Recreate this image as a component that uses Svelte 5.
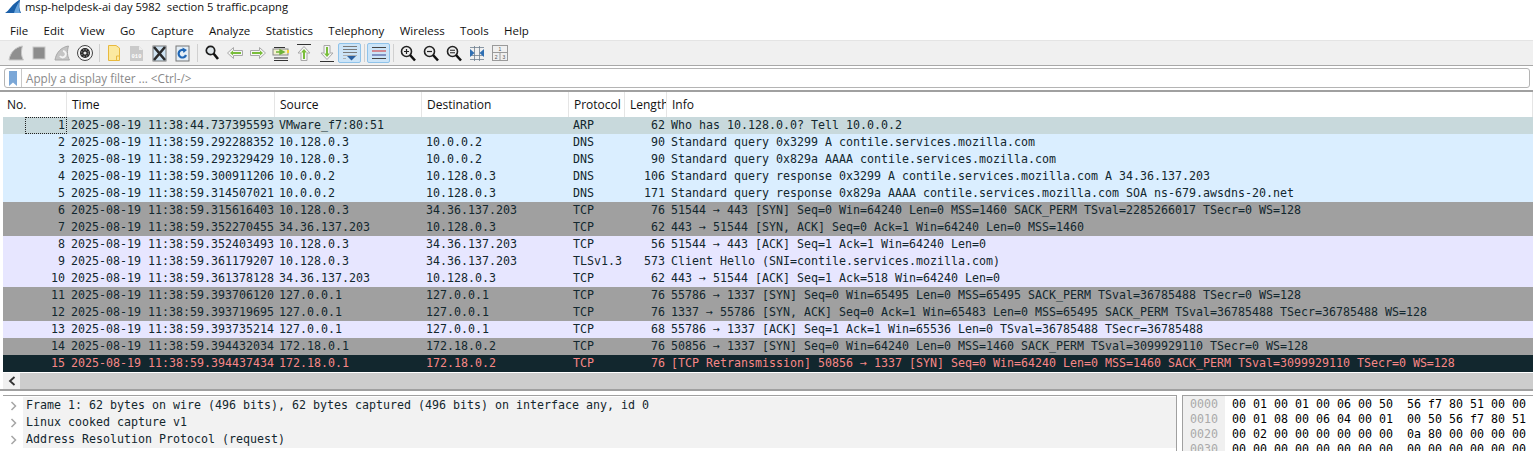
<script>
  const menus = ["File", "Edit", "View", "Go", "Capture", "Analyze", "Statistics", "Telephony", "Wireless", "Tools", "Help"];

  const columns = ["No.", "Time", "Source", "Destination", "Protocol", "Length", "Info"];

  const packets = [
    [1, "2025-08-19 11:38:44.737395593", "VMware_f7:80:51", "", "ARP", 62, "Who has 10.128.0.0? Tell 10.0.0.2", "arp"],
    [2, "2025-08-19 11:38:59.292288352", "10.128.0.3", "10.0.0.2", "DNS", 90, "Standard query 0x3299 A contile.services.mozilla.com", "dns"],
    [3, "2025-08-19 11:38:59.292329429", "10.128.0.3", "10.0.0.2", "DNS", 90, "Standard query 0x829a AAAA contile.services.mozilla.com", "dns"],
    [4, "2025-08-19 11:38:59.300911206", "10.0.0.2", "10.128.0.3", "DNS", 106, "Standard query response 0x3299 A contile.services.mozilla.com A 34.36.137.203", "dns"],
    [5, "2025-08-19 11:38:59.314507021", "10.0.0.2", "10.128.0.3", "DNS", 171, "Standard query response 0x829a AAAA contile.services.mozilla.com SOA ns-679.awsdns-20.net", "dns"],
    [6, "2025-08-19 11:38:59.315616403", "10.128.0.3", "34.36.137.203", "TCP", 76, "51544 → 443 [SYN] Seq=0 Win=64240 Len=0 MSS=1460 SACK_PERM TSval=2285266017 TSecr=0 WS=128", "syn"],
    [7, "2025-08-19 11:38:59.352270455", "34.36.137.203", "10.128.0.3", "TCP", 62, "443 → 51544 [SYN, ACK] Seq=0 Ack=1 Win=64240 Len=0 MSS=1460", "syn"],
    [8, "2025-08-19 11:38:59.352403493", "10.128.0.3", "34.36.137.203", "TCP", 56, "51544 → 443 [ACK] Seq=1 Ack=1 Win=64240 Len=0", "tcp"],
    [9, "2025-08-19 11:38:59.361179207", "10.128.0.3", "34.36.137.203", "TLSv1.3", 573, "Client Hello (SNI=contile.services.mozilla.com)", "tcp"],
    [10, "2025-08-19 11:38:59.361378128", "34.36.137.203", "10.128.0.3", "TCP", 62, "443 → 51544 [ACK] Seq=1 Ack=518 Win=64240 Len=0", "tcp"],
    [11, "2025-08-19 11:38:59.393706120", "127.0.0.1", "127.0.0.1", "TCP", 76, "55786 → 1337 [SYN] Seq=0 Win=65495 Len=0 MSS=65495 SACK_PERM TSval=36785488 TSecr=0 WS=128", "syn"],
    [12, "2025-08-19 11:38:59.393719695", "127.0.0.1", "127.0.0.1", "TCP", 76, "1337 → 55786 [SYN, ACK] Seq=0 Ack=1 Win=65483 Len=0 MSS=65495 SACK_PERM TSval=36785488 TSecr=36785488 WS=128", "syn"],
    [13, "2025-08-19 11:38:59.393735214", "127.0.0.1", "127.0.0.1", "TCP", 68, "55786 → 1337 [ACK] Seq=1 Ack=1 Win=65536 Len=0 TSval=36785488 TSecr=36785488", "tcp"],
    [14, "2025-08-19 11:38:59.394432034", "172.18.0.1", "172.18.0.2", "TCP", 76, "50856 → 1337 [SYN] Seq=0 Win=64240 Len=0 MSS=1460 SACK_PERM TSval=3099929110 TSecr=0 WS=128", "syn"],
    [15, "2025-08-19 11:38:59.394437434", "172.18.0.1", "172.18.0.2", "TCP", 76, "[TCP Retransmission] 50856 → 1337 [SYN] Seq=0 Win=64240 Len=0 MSS=1460 SACK_PERM TSval=3099929110 TSecr=0 WS=128", "bad"],
  ];

  const details = [
    "Frame 1: 62 bytes on wire (496 bits), 62 bytes captured (496 bits) on interface any, id 0",
    "Linux cooked capture v1",
    "Address Resolution Protocol (request)",
  ];

  const hexLines = [
    ["0000", "00 01 00 01 00 06 00 50  56 f7 80 51 00 00"],
    ["0010", "00 01 08 00 06 04 00 01  00 50 56 f7 80 51"],
    ["0020", "00 02 00 00 00 00 00 00  0a 80 00 00 00 00"],
    ["0030", "00 00 00 00 00 00 00 00  00 00 00 00 00 00"],
  ];
</script>

<div class="window">
  <div class="titlebar">
    <svg class="fin" width="18" height="14" viewBox="0 0 18 14">
      <path d="M2 13 C6 11 9 4 16 0 L17 0 C16 5 16 9 18 13 Z" fill="#1a5fa8" />
      <path d="M11 13 C12 9 14 5 16 2 C15.5 6 16 10 17 13 Z" fill="#6aa5dc" />
    </svg>
    <span>msp-helpdesk-ai day 5982&nbsp; section 5 traffic.pcapng</span>
  </div>

  <div class="menubar">
    {#each menus as m}
      <span class="menu">{m}</span>
    {/each}
  </div>

  <div class="toolbar">
    <!-- capture -->
    <div class="tool">
      <svg width="18" height="18" viewBox="0 0 18 18"><path d="M2 16 C3 9 8 3 15.5 2 C14 7 14 12 16.5 16 Z" fill="#8f8f8f" stroke="#c8c8c8" /></svg>
    </div>
    <div class="tool">
      <svg width="16" height="16" viewBox="0 0 16 16"><rect x="2" y="2" width="12" height="12" fill="#8c8c8c" stroke="#c8c8c8" /></svg>
    </div>
    <div class="tool">
      <svg width="18" height="18" viewBox="0 0 18 18">
        <path d="M2 16 C3 9 8 3 15.5 2 C14 7 14 12 16.5 16 Z" fill="#c4c4c4" stroke="#a8a8a8" />
        <path d="M7 12 A3.2 3.2 0 1 0 10 7" fill="none" stroke="#f4f4f4" stroke-width="2" />
      </svg>
    </div>
    <div class="tool">
      <svg width="18" height="18" viewBox="0 0 18 18">
        <circle cx="9" cy="9" r="7.5" fill="#f4f4f4" stroke="#444" />
        <circle cx="9" cy="9" r="5" fill="#222" />
        <circle cx="9" cy="9" r="3.4" fill="none" stroke="#888" stroke-width="1.2" stroke-dasharray="1.5 1.2" />
        <circle cx="9" cy="9" r="1.6" fill="#e8e8e8" />
      </svg>
    </div>
    <div class="sep"></div>

    <!-- files -->
    <div class="tool">
      <svg width="14" height="18" viewBox="0 0 14 18">
        <path d="M1.5 1.5 H9 L12.5 4 V16.5 H1.5 Z" fill="#fbe9a0" stroke="#e8b93e" />
        <path d="M9.5 16 V12 H12.5" fill="none" stroke="#e8b93e" />
      </svg>
    </div>
    <div class="tool">
      <svg width="15" height="17" viewBox="0 0 15 17">
        <path d="M1 1 H10 L14 5 V16 H1 Z" fill="#cacaca" />
        <path d="M10 1 V5 H14" fill="#ededed" />
        <text x="7.5" y="12.5" text-anchor="middle" class="bits">010</text>
      </svg>
    </div>
    <div class="tool">
      <svg width="15" height="17" viewBox="0 0 15 17">
        <rect x="1" y="1" width="13" height="15" fill="#cfe3f2" stroke="#777" />
        <path d="M2 2 L13 15 M13 2 L2 15" stroke="#2b2b2b" stroke-width="2.6" />
      </svg>
    </div>
    <div class="tool">
      <svg width="15" height="17" viewBox="0 0 15 17">
        <rect x="1" y="1" width="13" height="15" fill="#e4eef6" stroke="#777" />
        <path d="M11 10 A3.8 3.8 0 1 1 9.5 5.5" fill="none" stroke="#1f66b5" stroke-width="2.2" />
        <path d="M7.5 2.5 L12 5 L8.5 8 Z" fill="#1f66b5" />
      </svg>
    </div>
    <div class="sep"></div>

    <!-- navigation -->
    <div class="tool">
      <svg width="16" height="18" viewBox="0 0 16 18">
        <circle cx="6.5" cy="6.5" r="4.2" fill="#dfe6ea" stroke="#1c1c1c" stroke-width="1.7" />
        <path d="M9.5 9.5 L14 15" stroke="#111" stroke-width="2.6" />
      </svg>
    </div>
    <div class="tool">
      <svg width="16" height="12" viewBox="0 0 16 12">
        <path d="M0.5 6 L6.5 0.5 V3.5 H15.5 V8.5 H6.5 V11.5 Z" fill="#f6f6f6" stroke="#a8a8a8" />
        <path d="M3 6 L6 3.5 V5 H14 V7 H6 V8.5 Z" fill="#79bd3a" />
      </svg>
    </div>
    <div class="tool">
      <svg width="16" height="12" viewBox="0 0 16 12">
        <path d="M15.5 6 L9.5 0.5 V3.5 H0.5 V8.5 H9.5 V11.5 Z" fill="#f6f6f6" stroke="#a8a8a8" />
        <path d="M13 6 L10 3.5 V5 H2 V7 H10 V8.5 Z" fill="#79bd3a" />
      </svg>
    </div>
    <div class="tool">
      <svg width="18" height="18" viewBox="0 0 18 18">
        <path d="M2 3.5 H13 M2 14 H16 M2 16.5 H16" stroke="#333" />
        <rect x="1" y="5" width="15" height="6" fill="#f3f1cf" stroke="#888" />
        <path d="M4 8 H10 M8 6 L12 8 L8 10 Z" fill="#6db33a" stroke="#6db33a" stroke-width="1.4" />
        <rect x="15" y="6" width="2" height="3" fill="#f2d13b" />
      </svg>
    </div>
    <div class="tool">
      <svg width="14" height="18" viewBox="0 0 14 18">
        <path d="M0 0.5 H14" stroke="#333" />
        <path d="M7 2.5 L13 9 H10 V16.5 H4 V9 H1 Z" fill="#f6f6f6" stroke="#a8a8a8" />
        <path d="M7 5 L10 8.5 H8 V15 H6 V8.5 H4 Z" fill="#79bd3a" />
      </svg>
    </div>
    <div class="tool">
      <svg width="14" height="18" viewBox="0 0 14 18">
        <path d="M0 17.5 H14" stroke="#333" />
        <path d="M7 15.5 L13 9 H10 V1.5 H4 V9 H1 Z" fill="#f6f6f6" stroke="#a8a8a8" />
        <path d="M7 13 L10 9.5 H8 V3 H6 V9.5 H4 Z" fill="#79bd3a" />
      </svg>
    </div>
    <div class="tool on">
      <svg width="16" height="16" viewBox="0 0 16 16">
        <path d="M1 1.5 H15 M1 4.5 H15 M1 7.5 H15" stroke="#7a7a7a" />
        <path d="M1 10.5 H15 M1 13.5 H4" stroke="#b0b0b0" />
        <path d="M5 11 H14 L9.5 15.5 Z" fill="#2a5f9e" />
      </svg>
    </div>
    <div class="sep"></div>
    <div class="tool on">
      <svg width="16" height="14" viewBox="0 0 16 14">
        <path d="M1 1.5 H15" stroke="#444" />
        <path d="M1 5 H15" stroke="#d62e2e" />
        <path d="M1 9 H15" stroke="#34408f" />
        <path d="M1 12.5 H15" stroke="#444" />
      </svg>
    </div>
    <div class="sep"></div>

    <!-- zoom -->
    <div class="tool">
      <svg width="16" height="17" viewBox="0 0 16 17">
        <circle cx="6.5" cy="6.5" r="5" fill="#eeeeee" stroke="#222" stroke-width="1.6" />
        <path d="M10 10 L15 15.5" stroke="#111" stroke-width="2.6" />
        <path d="M4 6.5 H9 M6.5 4 V9" stroke="#222" stroke-width="1.2" />
      </svg>
    </div>
    <div class="tool">
      <svg width="16" height="17" viewBox="0 0 16 17">
        <circle cx="6.5" cy="6.5" r="5" fill="#eeeeee" stroke="#222" stroke-width="1.6" />
        <path d="M10 10 L15 15.5" stroke="#111" stroke-width="2.6" />
        <path d="M4 6.5 H9" stroke="#222" stroke-width="1.2" />
      </svg>
    </div>
    <div class="tool">
      <svg width="16" height="17" viewBox="0 0 16 17">
        <circle cx="6.5" cy="6.5" r="5" fill="#eeeeee" stroke="#222" stroke-width="1.6" />
        <path d="M10 10 L15 15.5" stroke="#111" stroke-width="2.6" />
        <path d="M4 5.3 H9 M4 7.7 H9" stroke="#222" stroke-width="1.1" />
      </svg>
    </div>
    <div class="tool">
      <svg width="14" height="15" viewBox="0 0 14 15">
        <path d="M0 1.5 H14 M0 13.5 H14 M0 9.5 H14 M4.5 0 V15 M9.5 0 V15" stroke="#6f7f8f" stroke-width="0.8" />
        <path d="M0 3 L4.5 7 L0 11 Z M14 3 L9.5 7 L14 11 Z" fill="#2f6fb3" />
      </svg>
    </div>
    <div class="tool">
      <svg width="16" height="16" viewBox="0 0 16 16">
        <rect x="0.5" y="0.5" width="15" height="15" fill="#f0f0f0" stroke="#9a9a9a" />
        <path d="M0.5 7.5 H15.5 M8 7.5 V15.5" stroke="#9a9a9a" />
        <text x="8" y="6" text-anchor="middle" class="pane-num">1</text>
        <text x="4.2" y="13.5" text-anchor="middle" class="pane-num">2</text>
        <text x="11.8" y="13.5" text-anchor="middle" class="pane-num">3</text>
      </svg>
    </div>
  </div>

  <div class="filterbar">
    <div class="filter">
      <div class="bookmark">
        <svg width="8" height="15" viewBox="0 0 8 15"><path d="M0 0 H8 V15 L4 11.5 L0 15 Z" fill="#7ba7d7" /></svg>
      </div>
      <span class="placeholder">Apply a display filter ... &lt;Ctrl-/&gt;</span>
    </div>
  </div>

  <div class="packets">
    <div class="row head">
      {#each columns as c}
        <div class="cell">{c}</div>
      {/each}
    </div>
    {#each packets as p, i}
      <div class="row {p[7]}">
        <div class="cell num" class:focus={i === 0}>{p[0]}</div>
        <div class="cell">{p[1]}</div>
        <div class="cell">{p[2]}</div>
        <div class="cell">{p[3]}</div>
        <div class="cell">{p[4]}</div>
        <div class="cell num">{p[5]}</div>
        <div class="cell">{p[6]}</div>
      </div>
    {/each}
  </div>

  <div class="hscroll">
    <div class="arrow">
      <svg width="8" height="10" viewBox="0 0 8 10"><path d="M6.5 1 L2 5 L6.5 9" fill="none" stroke="#333" stroke-width="1.8" /></svg>
    </div>
    <div class="track"></div>
  </div>

  <div class="split"></div>

  <div class="bottom">
    <div class="tree">
      {#each details as d}
        <div class="tree-row">
          <div class="chev">
            <svg width="7" height="10" viewBox="0 0 7 10"><path d="M1.5 1 L5.5 5 L1.5 9" fill="none" stroke="#a5a5a5" stroke-width="1.5" /></svg>
          </div>
          <div class="tree-text">{d}</div>
        </div>
      {/each}
    </div>
    <div class="hex">
      <div class="offsets">
        {#each hexLines as h}
          <div>{h[0]}</div>
        {/each}
      </div>
      <div class="bytes">
        {#each hexLines as h}
          <div>{h[1]}</div>
        {/each}
      </div>
    </div>
  </div>
</div>

<style>
  :global(body) {
    margin: 0;
    background: #fff;
    overflow: hidden;
  }

  .window {
    width: 1533px;
    height: 451px;
    overflow: hidden;
    font-family: "Open Sans", "Noto Sans", sans-serif;
    font-size: 11.5px;
    color: #111;
    background: #fff;
  }

  .titlebar {
    height: 20px;
    display: flex;
    align-items: center;
    overflow: hidden;
    position: relative;
  }
  .titlebar span {
    margin-left: 25px;
    padding-bottom: 8px;
    font-size: 11.2px;
  }
  .fin {
    position: absolute;
    left: 3px;
    top: 0;
  }

  .menubar {
    height: 20px;
    display: flex;
    align-items: center;
    padding-left: 3px;
  }
  .menu {
    padding: 0 7px;
    margin-right: 1.4px;
    font-size: 11.5px;
  }

  .toolbar {
    height: 26px;
    box-sizing: border-box;
    display: flex;
    align-items: center;
    padding-left: 4px;
    background: #f0f0f0;
    border-top: 1px solid #e4e4e4;
    border-bottom: 1px solid #a8a8a8;
  }
  .tool {
    width: 23px;
    height: 20px;
    box-sizing: border-box;
    display: flex;
    align-items: center;
    justify-content: center;
    border-radius: 2px;
  }
  .tool.on {
    background: #cce4f7;
    border: 1px solid #8fc3ea;
  }
  .sep {
    width: 1px;
    height: 18px;
    margin: 0 2.5px;
    background: #d0d0d0;
  }
  .bits {
    font-family: "Liberation Mono", monospace;
    font-size: 5.5px;
    font-weight: bold;
    fill: #fff;
  }
  .pane-num {
    font-family: "Liberation Sans", sans-serif;
    font-size: 5px;
    fill: #555;
  }

  .filterbar {
    height: 26px;
    box-sizing: border-box;
    padding: 2px 3px 0 4px;
    border-bottom: 2px solid #a0a0a0;
  }
  .filter {
    height: 20px;
    box-sizing: border-box;
    display: flex;
    align-items: center;
    border: 1px solid #b4b4b4;
    border-radius: 3px;
    background: #fff;
  }
  .bookmark {
    width: 17px;
    height: 100%;
    box-sizing: border-box;
    display: flex;
    align-items: center;
    justify-content: center;
    border-right: 1px solid #c8c8c8;
  }
  .placeholder {
    margin-left: 4px;
    color: #8a8a8a;
    font-size: 11.7px;
  }

  .packets {
    margin-left: 3px;
    font-family: "DejaVu Sans Mono", monospace;
    font-size: 11.63px;
  }
  .row {
    display: grid;
    grid-template-columns: 64px 208px 147px 147px 56px 42px 1fr;
    height: 17px;
    line-height: 17px;
    color: #12272e;
  }
  .cell {
    padding: 0 2px 0 4px;
    white-space: pre;
    overflow: hidden;
    box-sizing: border-box;
  }
  .cell.num {
    text-align: right;
  }
  .cell.focus {
    margin-left: 22px;
    outline: 1px dotted #222;
    outline-offset: -1px;
  }

  .head {
    height: 25px;
    line-height: 26px;
    font-family: "Open Sans", "Noto Sans", sans-serif;
    font-size: 12px;
    color: #111;
    background: #fff;
  }
  .head .cell {
    padding-left: 5px;
    border-right: 1px solid #e5e5e5;
  }
  .head .cell:first-child {
    padding-left: 4px;
  }

  .arp { background: #c8d9dc; }
  .dns { background: #daeeff; }
  .syn { background: #a0a0a0; }
  .tcp { background: #e7e6ff; }
  .bad { background: #12272e; color: #f78787; }

  .hscroll {
    height: 16px;
    margin: 1px 0 0 3px;
    display: flex;
  }
  .arrow {
    width: 17px;
    display: flex;
    align-items: center;
    justify-content: center;
    background: #f0f0f0;
  }
  .track {
    flex: 1;
    background: #cdcdcd;
  }

  .split {
    height: 2px;
    background: #a0a0a0;
  }

  .bottom {
    display: flex;
    height: 60px;
    margin-top: 4px;
    margin-left: 3px;
    font-family: "DejaVu Sans Mono", monospace;
    font-size: 11.63px;
  }
  .tree {
    width: 1174px;
    flex-shrink: 0;
    box-sizing: border-box;
    padding-top: 1px;
    border-top: 1px solid #a0a0a0;
    border-right: 1px solid #a0a0a0;
  }
  .tree-row {
    display: flex;
    height: 17px;
    line-height: 17px;
  }
  .chev {
    width: 20px;
    display: flex;
    align-items: center;
    justify-content: center;
  }
  .tree-text {
    flex: 1;
    padding-left: 3px;
    background: #f2f2f2;
    color: #12272e;
  }

  .hex {
    flex: 1;
    margin-left: 5px;
    display: flex;
    border-top: 1px solid #a0a0a0;
    border-left: 1px solid #a0a0a0;
    line-height: 15px;
    overflow: hidden;
  }
  .offsets {
    width: 42px;
    flex-shrink: 0;
    padding: 1px 0 0 7px;
    box-sizing: border-box;
    color: #aaa;
    background: #f0f0f0;
  }
  .bytes {
    padding: 1px 0 0 7px;
    color: #000;
    white-space: pre;
  }
</style>
